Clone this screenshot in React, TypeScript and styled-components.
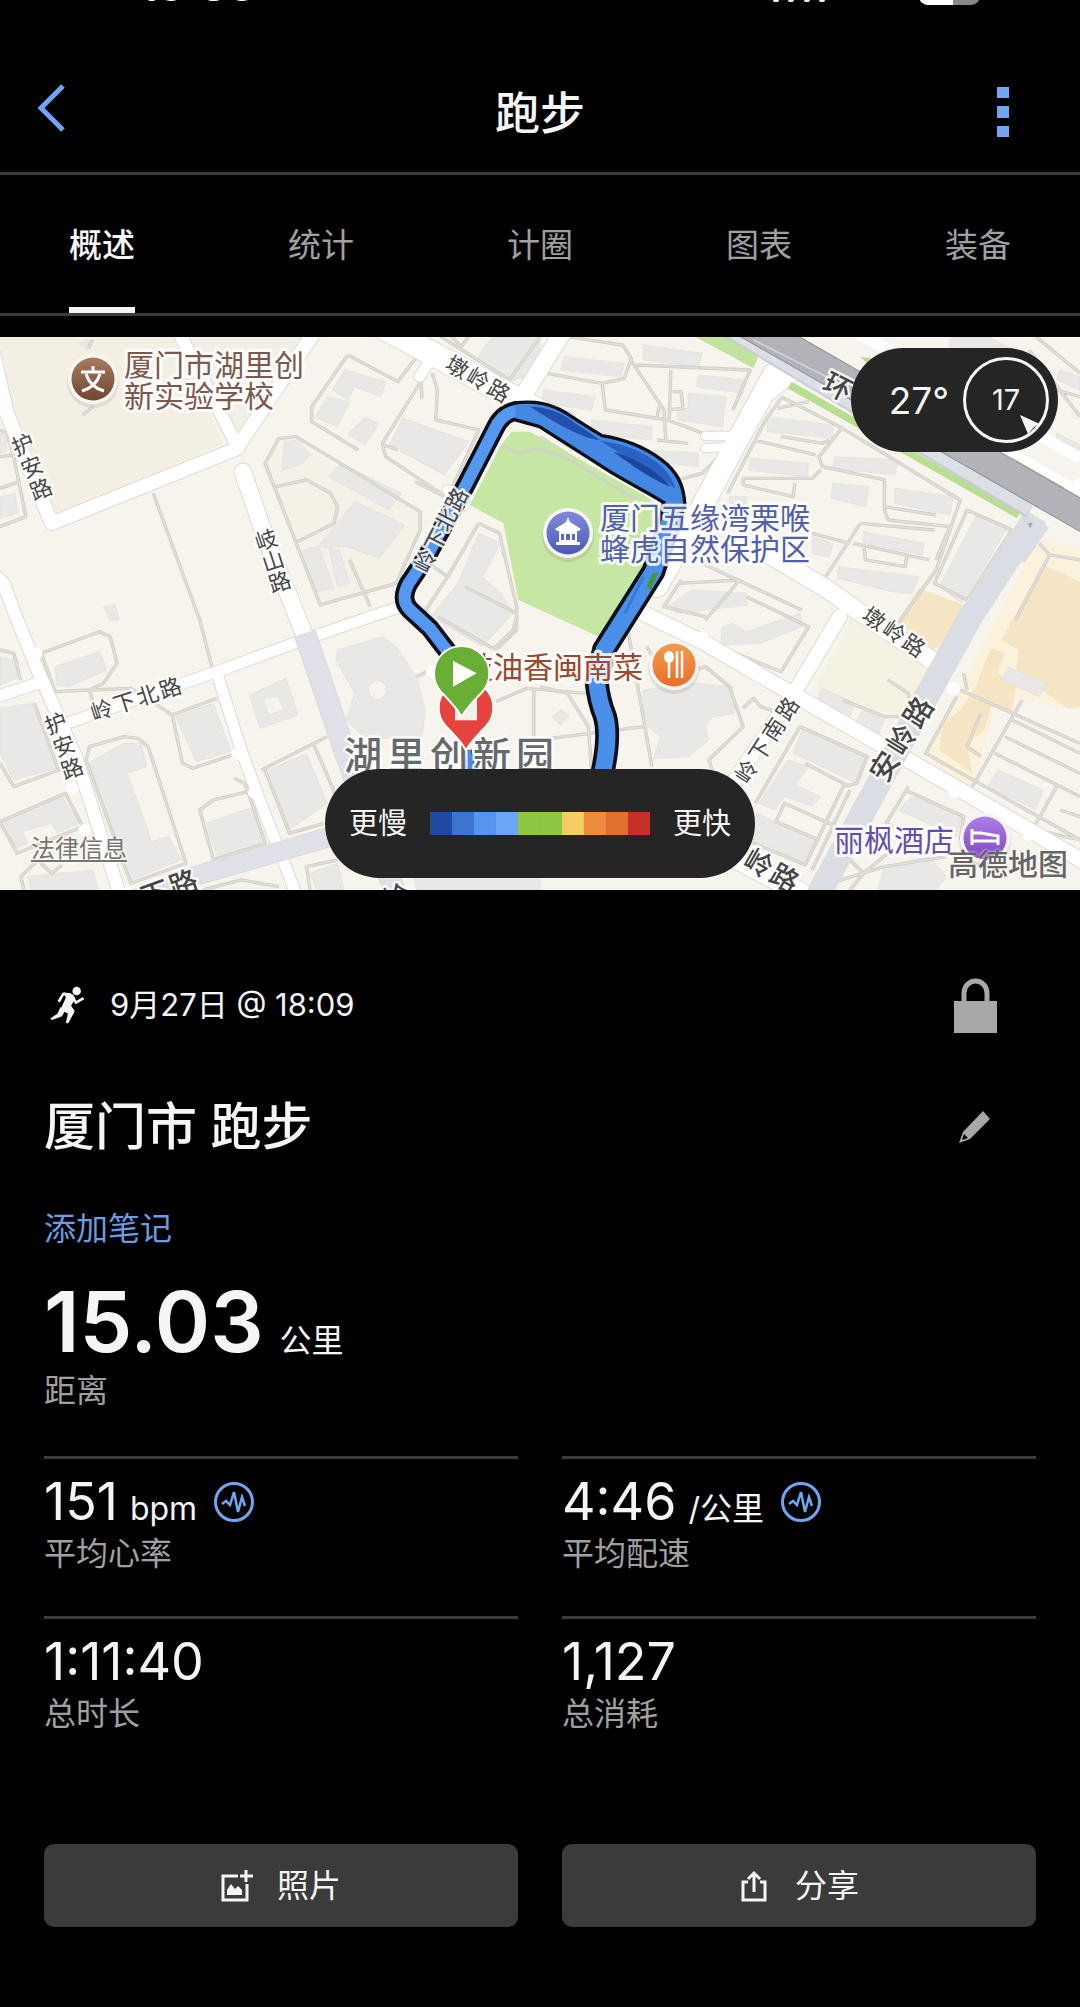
import React, { useState } from "react";
import styled, { createGlobalStyle } from "styled-components";

const fontStack = `Inter, "Noto Sans CJK SC", sans-serif`;

const color = {
  bg: "#000000",
  text: "#f5f5f5",
  muted: "#a0a0a0",
  icon: "#a8a8a8",
  accent: "#6ea6f4",
  line: "#3c3c3c",
  panel: "#252525",
  button: "#3b3b3b",
};

const GlobalStyle = createGlobalStyle`
  *, *::before, *::after { box-sizing: border-box; }
  body { margin: 0; background: ${color.bg}; color: ${color.text}; font-family: ${fontStack}; }
  button { font: inherit; color: inherit; background: none; border: 0; padding: 0; cursor: pointer; }
  h1, h2, p, dl, dd, dt { margin: 0; font-weight: 400; }
`;

const Page = styled.main`
  min-height: 100vh;
  padding-bottom: 80px;
`;

/* ---------- status bar, header, tabs ---------- */

const StatusBar = styled.div`
  display: flex;
  align-items: flex-end;
  justify-content: space-between;
  height: 6px;
  padding: 0 100px 0 139px;
  overflow: hidden;
`;

const Clock = styled.span`
  margin-bottom: 5px;
  font-size: 44px;
  font-weight: 600;
  line-height: 32px;
`;

const StatusIcons = styled.div`
  display: flex;
  align-items: flex-end;
  gap: 92px;
`;

const Header = styled.header`
  display: grid;
  grid-template-columns: 80px 1fr 80px;
  align-items: center;
  height: 169px;
  padding: 46px 38px 0;
  border-bottom: 3px solid ${color.line};
`;

const HeaderButton = styled.button<{ $side: "left" | "right" }>`
  display: flex;
  justify-content: ${(p) => (p.$side === "left" ? "flex-start" : "flex-end")};
  align-items: center;
  height: 64px;
  padding-right: ${(p) => (p.$side === "right" ? "33px" : "0")};
`;

const HeaderTitle = styled.h1`
  padding-top: 3px;
  font-size: 45px;
  font-weight: 500;
  line-height: 52px;
  text-align: center;
`;

const Tabs = styled.nav`
  display: flex;
  justify-content: space-between;
  padding: 0 69px;
  border-bottom: 3px solid ${color.line};
`;

const Tab = styled.button<{ $active: boolean }>`
  height: 138px;
  padding-top: 8px;
  border-bottom: 6px solid ${(p) => (p.$active ? color.text : "transparent")};
  color: ${(p) => (p.$active ? color.text : color.muted)};
  font-size: 33px;
  font-weight: ${(p) => (p.$active ? 500 : 400)};
  line-height: 40px;
`;

/* ---------- map ---------- */

const MapPanel = styled.section`
  position: relative;
  margin-top: 21px;
  overflow: hidden;
`;

const MapCanvas = styled.svg`
  display: block;
  width: 100%;
  height: auto;
  font-family: ${fontStack};
`;

const WeatherPill = styled.div`
  position: absolute;
  top: 11px;
  right: 22px;
  display: flex;
  align-items: center;
  gap: 14px;
  height: 104px;
  padding: 0 9px 0 38px;
  border-radius: 52px;
  background: ${color.panel};
  font-size: 37px;
`;

const PaceLegend = styled.div`
  position: absolute;
  bottom: 12px;
  left: 50%;
  transform: translateX(-50%);
  display: flex;
  align-items: center;
  gap: 23px;
  height: 109px;
  padding: 0 24px;
  border-radius: 55px;
  background: ${color.panel};
  font-size: 29px;
  line-height: 40px;
  white-space: nowrap;
`;

const PaceScale = styled.div`
  display: flex;
  height: 23px;
`;

const PaceStep = styled.span<{ $fill: string }>`
  width: 22px;
  background: ${(p) => p.$fill};
`;

const LegalLink = styled.a`
  position: absolute;
  left: 31px;
  bottom: 26px;
  color: #77756f;
  font-size: 24px;
  line-height: 30px;
  text-underline-offset: 3px;
  text-shadow: 0 0 3px #ffffff, 0 0 3px #ffffff;
`;

const MapCredit = styled.span`
  position: absolute;
  right: 12px;
  bottom: 6px;
  color: #666666;
  font-size: 30px;
  font-weight: 500;
  line-height: 40px;
  text-shadow: 0 0 3px #ffffff;
`;

/* ---------- activity details ---------- */

const Details = styled.section`
  padding: 87px 44px 0;
`;

const SplitRow = styled.div`
  display: flex;
  align-items: center;
  justify-content: space-between;
`;

const When = styled.p`
  display: flex;
  align-items: center;
  gap: 24px;
  padding-left: 5px;
  font-size: 31px;
  line-height: 40px;
`;

const IconButton = styled.button`
  display: flex;
  align-items: center;
  justify-content: center;
  width: 56px;
  height: 56px;
  margin-right: 33px;
  color: ${color.icon};
`;

const TitleRow = styled(SplitRow)`
  height: 60px;
  margin-top: 64px;
`;

const ActivityTitle = styled.h2`
  font-size: 51px;
  font-weight: 500;
  line-height: 60px;
`;

const NoteButton = styled.button`
  display: block;
  margin-top: 52px;
  color: #6c9be2;
  font-size: 32px;
  line-height: 40px;
`;

const Distance = styled.dl`
  display: flex;
  flex-direction: column-reverse;
  gap: 7px;
  margin-top: 31px;
`;

const MetricGrid = styled.dl`
  display: grid;
  grid-template-columns: 1fr 1fr;
  column-gap: 44px;
  margin-top: 45px;
`;

const Metric = styled.div`
  display: flex;
  flex-direction: column-reverse;
  justify-content: flex-end;
  gap: 6px;
  height: 160px;
  padding-top: 17px;
  border-top: 3px solid ${color.line};
`;

const MetricLabel = styled.dt`
  color: ${color.muted};
  font-size: 32px;
  line-height: 40px;
`;

const MetricValue = styled.dd<{ $large?: boolean }>`
  display: flex;
  align-items: baseline;
  gap: ${(p) => (p.$large ? "16px" : "12px")};
  height: ${(p) => (p.$large ? "84px" : "52px")};
  font-size: ${(p) => (p.$large ? "84px" : "52px")};
  font-weight: ${(p) => (p.$large ? 600 : 400)};
  line-height: ${(p) => (p.$large ? "84px" : "52px")};
`;

const Unit = styled.span`
  font-size: 32px;
  font-weight: 400;
  line-height: 40px;
`;

const PulseButton = styled.button`
  align-self: center;
  display: flex;
  margin-left: 5px;
  color: ${color.accent};
`;

const Actions = styled.div`
  display: grid;
  grid-template-columns: 1fr 1fr;
  gap: 44px;
  margin-top: 68px;
`;

const ActionButton = styled.button`
  display: flex;
  align-items: center;
  justify-content: center;
  gap: 24px;
  height: 83px;
  border-radius: 10px;
  background: ${color.button};
  font-size: 32px;
  line-height: 40px;
`;

/* ---------- icons ---------- */

const SignalIcon = () => (
  <svg width="54" height="6" viewBox="0 0 54 6" fill={color.text} aria-hidden="true">
    {[0, 15, 31, 46].map((x) => (
      <rect key={x} x={x} y="-20" width="6" height="22" rx="2" />
    ))}
  </svg>
);

const BatteryIcon = () => (
  <svg width="61" height="6" viewBox="0 0 61 6" aria-hidden="true">
    <clipPath id="battery">
      <rect x="0" y="-24" width="61" height="29" rx="9" />
    </clipPath>
    <g clipPath="url(#battery)">
      <rect width="61" height="6" fill="#888888" />
      <rect width="34" height="6" fill="#ffffff" />
    </g>
  </svg>
);

const BackIcon = () => (
  <svg width="28" height="56" viewBox="0 0 28 56" fill="none" stroke={color.accent} strokeWidth="5" aria-hidden="true">
    <path d="M25 2 3 24 25 46" />
  </svg>
);

const MoreIcon = () => (
  <svg width="12" height="50" viewBox="0 0 12 50" fill={color.accent} aria-hidden="true">
    <rect width="12" height="11" />
    <rect y="19" width="12" height="12" />
    <rect y="39" width="12" height="11" />
  </svg>
);

const RunnerIcon = () => (
  <svg width="37" height="38" viewBox="142 136 106 116" fill="none" stroke={color.text} strokeLinejoin="round" aria-hidden="true">
    <circle cx="223" cy="151" r="13" fill={color.text} stroke="none" />
    <path d="M184 156 212 162 219 174 206 196 216 211 196 216 174 206 190 172Z" fill={color.text} stroke="none" />
    <path d="M206 162 182 160 168 184" strokeWidth="8" />
    <path d="M210 170 221 187 244 173" strokeWidth="8" />
    <path d="M186 202 214 208 215 216 206 232 197 249 191 248 196 226 197 220 180 210Z" fill={color.text} strokeWidth="2" />
    <path d="M174 202 188 210 177 228 147 239 144 235 165 221Z" fill={color.text} strokeWidth="2" />
  </svg>
);

const LockIcon = () => (
  <svg width="43" height="56" viewBox="0 0 43 56" aria-hidden="true">
    <path d="M10 26V16a11.500 12 0 0 1 23 0V26" fill="none" stroke="currentColor" strokeWidth="5" />
    <rect y="24" width="43" height="32" fill="currentColor" />
  </svg>
);

const PencilIcon = () => (
  <svg width="32" height="32" viewBox="0 0 32 32" fill="currentColor" aria-hidden="true">
    <path fillRule="evenodd" d="M24 0 31 8 11 28 0 32 4 21ZM5 23 3 29 9 27Z" />
  </svg>
);

const PulseIcon = () => (
  <svg width="40" height="40" viewBox="0 0 40 40" fill="none" stroke="currentColor" aria-hidden="true">
    <circle cx="20" cy="20" r="18.500" strokeWidth="3" />
    <path d="M8 22 12 19 16 23 20 10 24 30 28 15 31 24" strokeWidth="2.500" />
  </svg>
);

const AddPhotoIcon = () => (
  <svg width="32" height="32" viewBox="0 0 32 32" fill="none" stroke={color.text} strokeWidth="3" aria-hidden="true">
    <path d="M17 6H2V30H26V14M25 0V12M19 6H32" />
    <path d="M6 25V20L10 14 14 19 17 16 21 20V25Z" fill={color.text} stroke="none" />
  </svg>
);

const ShareIcon = () => (
  <svg width="32" height="32" viewBox="-2 0 32 32" fill="none" stroke={color.text} strokeWidth="3" aria-hidden="true">
    <path d="M7 12H2V30H24V12H19M13 22V3M7 9 13 3 19 9" />
  </svg>
);

const WindDial = () => (
  <svg width="86" height="88" viewBox="-43 -44 86 88" role="img" aria-label="风速 17">
    <circle r="41.500" fill="none" stroke={color.text} strokeWidth="3" />
    <path d="M14 15 34 24 28 27 22 34Z" fill={color.text} />
    <text y="10" textAnchor="middle" fill={color.text} fontSize="29" fontFamily={fontStack}>
      17
    </text>
  </svg>
);

/* ---------- map drawing ---------- */

type Road = { d: string; w: number; fill?: string };

const E = 1568; // grid columns per map tile
const S = 840; // grid rows per map tile

const landNW = [
  ["M0 20H500L650 340 160 560 20 250 0 130Z", "#f3f0e3"],
  ["M540 20H900L700 330 650 320Z", "#f2efe8"],
  ["M760 400 820 320 1220 545V600L1150 760 930 825Z", "#f5f1e6"],
];

const buildings = {
  nw: [
    "M1000 120 1120 155 1105 200 1030 170 1010 210 965 180Z",
    "M950 200 1015 215 980 290 915 262Z",
    "M1060 262 1100 280 1060 345 1010 312Z",
    "M1170 265 1362 335 1290 435 1130 345Z",
    "M825 335 865 330 900 375 880 400 820 420Z",
    "M990 400 1165 490 1130 540 955 440Z",
    "M1030 515 1175 585 1100 685 1010 650 925 650Z",
    "M870 665 925 648 970 775 920 785Z",
    "M955 650 985 660 1015 760 980 770Z",
    "M1390 610 1455 640 1400 740 1455 790 1490 850 1400 950 1250 860 1330 760Z",
    "M1430 20H1568V130L1490 150 1380 90Z",
    "M0 310 22 320 18 365 0 370Z",
    "M0 500 45 490 50 550 0 565Z",
    "M230 40 270 30 250 60Z",
    "M300 830 335 825 345 870 320 870Z",
  ],
  ne: [
    "M70 80 245 100 235 140 60 120Z",
    "M300 45 470 70 460 110 300 90Z",
    "M460 135 590 150 590 190 455 170Z",
    "M430 190 540 200 530 290 400 270 400 235 430 235Z",
    "M10 180 160 200 150 240 5 220Z",
    "M150 270 325 290 325 330 150 310Z",
    "M305 360 460 370 460 410 320 395Z",
    "M660 260 850 285 850 325 660 305Z",
    "M610 385 780 400 775 440 605 420Z",
    "M855 380 1040 390 1030 435 850 415Z",
    "M850 460 955 470 945 530 845 505Z",
    "M1030 475 1200 500 1190 555 1030 520Z",
    "M940 605 1115 640 1110 675 940 640Z",
    "M865 710 1100 740 1080 790 1020 785 865 745Z",
    "M1270 550 1360 590 1225 820 1160 770Z",
    "M550 500H600V520H550Z",
    "M790 620 850 640 840 680 790 670Z",
    "M1190 20H1300L1375 60 1190 50Z",
    "M1510 120 1568 140V180L1500 150Z",
    "M1500 310 1568 345V385L1500 350Z",
    "M440 780 600 790 600 825 400 850 370 830Z",
  ],
  sw: [
    "M160 170 290 125 310 180 200 230 165 225Z",
    "M0 295 95 280 165 475 40 510 0 430Z",
    "M0 140 45 150 50 205 0 225Z",
    "M510 320 620 280 670 425 570 455Z",
    "M725 255 830 205 865 315 755 355ZM765 265 780 315 825 300 808 258Z",
    "M980 120 1110 80 1150 110 1210 200 1235 300 1225 385H1060L1005 330 1030 250 975 150ZM1070 240A26 28 0 1 0 1122 240 26 28 0 1 0 1070 240Z",
    "M255 460 360 400 410 400 425 470 370 490 440 695 490 680 525 750 380 810Z",
    "M10 630 180 560 230 640 165 670 150 640 65 665 80 700 45 715Z",
    "M600 640 740 590 760 700 630 740Z",
    "M780 480 890 430 950 580 840 660Z",
    "M80 800 270 780 285 840H90Z",
    "M900 790 980 760 1000 840H920Z",
    "M1200 800H1568V840H1210Z",
  ],
  se: [
    "M530 50 560 40 600 65 755 10 760 50 640 100 525 105Z",
    "M300 240 450 220 560 230 565 310 500 320 480 350 490 390 430 440 330 445 350 380 300 340Z",
    "M60 300 85 315 60 345 35 320Z",
    "M820 235 915 280 895 330 800 275Z",
    "M935 300 1000 330 975 390 915 345Z",
    "M765 350 940 440 920 520 735 430Z",
    "M720 450 780 470 740 525 815 560 790 590 710 560 680 600 635 580Z",
    "M630 610 800 690 770 760 600 680Z",
    "M1080 560 1225 620 1210 680 1040 600Z",
    "M1330 480 1460 540 1440 600 1300 530Z",
    "M1360 170 1470 220 1450 260 1340 210Z",
    "M1000 770 1130 740 1180 800 1150 840H980Z",
  ],
};

const farmland = [
  "M1100 775 1245 830 1190 940 1130 960 1040 870Z",
  "M1460 705 1568 755V1130L1530 1135 1470 1090 1380 1040 1390 960 1340 930Z",
  "M1310 955 1350 970 1330 1030 1385 1060 1370 1140 1310 1130 1290 1200 1240 1240 1255 1330 1160 1260 1170 1180 1220 1140 1260 1080Z",
];

const lanes = {
  nw: "M1010 75 905 230V275L1040 360M1010 75 1155 155 1210 80M1225 150 1110 340 1120 380 1280 490M1255 130 1270 180 1265 270 1390 300 1310 480M860 320 1220 545V600L1150 760 930 825 770 400 810 325ZM800 470 890 450 960 490 980 530 970 580 865 635M1015 690 1075 830M1115 345 1155 360M1205 455 1290 500M1222 150 1225 205M445 490 580 870 615 1010M0 300 20 310 40 380 75 560 0 590M0 380 38 375M0 475 58 455M1390 580 1300 740 1230 850M1390 580 1450 610 1500 830 1500 900 1440 960M1350 770 1500 850M1245 700 1300 740M1460 350 1510 375 1568 355M1280 20 1480 150 1568 20M1310 20 1340 50 1360 20M240 255 270 230M255 55 270 30",
  ne: "M260 85 360 240 365 330M280 105 610 120 560 240M180 160 190 240 370 270 500 320M20 130 180 160 245 145 265 85 240 45 80 20M380 120 375 270M385 185H410L415 235 370 240M345 230 340 265M0 90 20 130M700 200 870 290 1220 510 1150 720 1040 880M700 205 655 270 545 490M690 235 780 215M880 290 810 380 820 410 1000 450 1000 540 1010 570M1000 530 1150 555M620 330 800 375M590 445H790L815 420M590 440V465L735 500 740 460M700 320 820 340 840 330M930 580 830 740M930 580 1145 600M910 640 1130 690M940 640 945 690 1060 710 1065 680M1240 540 1145 760 1240 810 1370 600ZM1450 640 1480 675 1568 690M1480 675 1380 870M790 610 900 640M1010 570 1190 590 1150 690M400 760 580 750 480 870M470 700 760 840M410 750 360 830 480 860M340 330 430 340M560 340 470 430 400 450M1420 60 1568 260M1440 20 1568 130M1500 180 1568 200M0 320 60 360 280 500",
  sw: "M120 130 290 65 320 80 340 160 300 220 260 240 160 245ZM260 240 270 280M260 240 380 235 500 315 630 265M500 315 530 460 560 475 690 430M250 450 260 410 360 380 400 385 430 410 540 760 380 820ZM100 280 170 480 40 530 0 460M0 120 40 130 60 210M0 635 190 550 240 650 50 730ZM580 600 620 570 720 545 770 700 620 750ZM680 505 710 520 720 545M760 480 950 380M910 400 985 580M770 480 840 670 940 640M60 800 110 750 150 790 180 765M60 800 70 840M900 840 890 770 980 750M590 840 700 810 810 830M1210 200 1250 180M1440 275 1530 235 1700 250M1550 240V380M1270 20 1440 120M1500 20 1490 60 1430 120",
  se: "M520 110 700 185 780 50 600 -40M0 230 80 250 140 350 150 480M30 385 300 350M255 60 325 470M310 110 370 210 480 170 550 230 590 350 490 450 500 480M590 295 620 265 640 290 700 310M755 350 625 580M755 350 950 440 920 520 880 530 770 765 600 690M770 460 890 525M900 540 790 780M860 650 710 580 685 635 810 690M1010 210 1070 250 1080 320M880 270 1000 320 1060 320M1210 260 1120 430 1568 690M1400 270 1250 540M1220 240 1568 400M1370 330 1568 430M1350 380 1568 490M1320 430 1568 560M1280 310 1240 410 1280 440M1500 530 1430 660M1070 530 1005 640 1060 670M1060 540 1230 620 1220 690M1440 660 1568 690M1510 600 1568 620M780 840 1000 770 1180 740M880 730 940 790 900 840M940 790 1010 730M1230 190 1240 240",
};

const roads: Road[] = [
  { d: "M-20 70 20 250 150 580 690 355", w: 40 },
  { d: "M505 -20 690 350", w: 36 },
  { d: "M930 -20 690 350", w: 40 },
  { d: "M705 425 770 620 890 930", w: 48 },
  { d: "M-30 720 10 760 50 870 105 1010 220 1280 350 1700", w: 36 },
  { d: "M-10 1100 110 1060", w: 34 },
  { d: "M180 1185 630 1025 880 930 1190 820", w: 32 },
  { d: "M630 1030 700 1260 750 1400 870 1720", w: 32 },
  { d: "M1090 -20 1560 240 1640 280", w: 70 },
  { d: "M1250 90 1218 140", w: 30 },
  { d: "M1650 -20 1500 230", w: 50 },
  { d: "M1360 500 1300 480", w: 30 },
  { d: `M${E + 680} 130 ${E + 590} 300 ${E + 480} 510 ${E + 340} 770`, w: 62 },
  { d: `M${E + 740} 130 ${E + 640} 210`, w: 40 },
  { d: `M${E + 480} 318H${E + 560}`, w: 26 },
  { d: `M${E + 480} 355 ${E + 540} 350`, w: 24 },
  { d: `M${E + 610} 640 ${E + 830} 775 ${E + 960} 870 ${E + 1160} 1005`, w: 52 },
  { d: `M${E + 200} 800 ${E + 480} 940 ${E + 730} 1090 ${E + 1000} 1250 ${E + 1220} 1380 ${E + 1620} 1620`, w: 44 },
  { d: `M${E + 870} 860 ${E + 740} 1085 ${E + 560} 1360`, w: 42 },
  { d: `M${E + 560} 1580 ${E + 760} 1690`, w: 60 },
];

const arterials: Road[] = [
  { d: `M885 ${S + 70} 1000 ${S + 420} 1100 ${S + 700} 1150 ${S + 860}`, w: 60, fill: "#dfe0e8" },
  { d: `M340 ${S + 890} 560 ${S + 800} 960 ${S + 680}`, w: 54, fill: "#dfe0e8" },
  { d: `M${E + 1440} 560 ${E + 1250} 860 ${E + 1010} ${S + 470} ${E + 800} ${S + 870}`, w: 66, fill: "#dadde4" },
];

const RoadSet = ({ items, cap = "round" }: { items: Road[]; cap?: "round" | "butt" }) => (
  <g fill="none" strokeLinejoin="round" strokeLinecap={cap}>
    {items.map((r) => (
      <path key={`c${r.d}`} d={r.d} stroke="#dedbd5" strokeWidth={r.w + 6} />
    ))}
    {items.map((r) => (
      <path key={r.d} d={r.d} stroke={r.fill ?? "#ffffff"} strokeWidth={r.w} />
    ))}
  </g>
);

const LaneSet = ({ d }: { d: string }) => (
  <g fill="none" strokeLinejoin="round">
    <path d={d} stroke="#d0cec7" strokeWidth="10" />
    <path d={d} stroke="#e0ded7" strokeWidth="5" />
  </g>
);

type RoadLabelProps = {
  name: string;
  x: number;
  y: number;
  angle: number;
  pitch: number;
  stacked?: boolean;
  size?: number;
  weight?: number;
  fill?: string;
};

/* A street name set along its road; stacked names run down steep roads. */
const RoadLabel = ({ name, x, y, angle, pitch, stacked, size = 22, weight = 400, fill = "#454545" }: RoadLabelProps) => {
  const steps = Array.from(name).map((_, i) => (i - (name.length - 1) / 2) * pitch);
  const base = Math.round(size * 0.38);
  return (
    <text
      transform={`translate(${x} ${y}) rotate(${angle})`}
      x={stacked ? steps.map(() => 0).join(" ") : steps.join(" ")}
      y={stacked ? steps.map((s) => s + base).join(" ") : base}
      fontSize={size}
      fontWeight={weight}
      fill={fill}
      stroke="#ffffff"
      strokeWidth="5"
      strokeOpacity="0.85"
      strokeLinejoin="round"
      paintOrder="stroke"
      textAnchor="middle"
    >
      {name}
    </text>
  );
};

type PlaceProps = { x: number; y: number; fill: string; lines: string[]; anchor?: "start" | "end" };

const PlaceLabel = ({ x, y, fill, lines, anchor = "start" }: PlaceProps) => (
  <g fontSize="30" fontWeight="400" fill={fill} stroke="#ffffff" strokeOpacity="0.85" strokeWidth="6" strokeLinejoin="round" textAnchor={anchor}>
    {lines.map((line, i) => (
      <text key={line} x={x} y={y + i * 31} paintOrder="stroke">
        {line}
      </text>
    ))}
  </g>
);

const PlaceBadge = ({ x, y, paint, children }: { x: number; y: number; paint: string; children: React.ReactNode }) => (
  <g transform={`translate(${x} ${y})`}>
    <circle cy="3" r="26" fill="#000000" opacity="0.08" />
    <circle r="25" fill="#f7f5f3" />
    <circle r="21.500" fill={paint} />
    {children}
  </g>
);

const Gradient = ({ id, from, to }: { id: string; from: string; to: string }) => (
  <linearGradient id={id} x1="0" y1="0" x2="0" y2="1">
    <stop offset="0" stopColor={from} />
    <stop offset="1" stopColor={to} />
  </linearGradient>
);

const westLeg = "M215 830 150 745 90 690Q60 660 85 612L140 530 255 320 345 145Q368 96 415 92L450 98";
const eastLeg = "M884 360 868 430 820 575 672 810 650 905Q655 960 675 1010 692 1070 665 1190";
const northBand =
  "M405 74C470 66 510 78 550 100C590 125 625 150 665 172C730 182 790 205 840 242C885 275 908 315 910 380L852 362C800 330 750 305 700 275L480 135 405 114Z";

const RouteMap = () => (
  <MapCanvas viewBox="0 0 1080 553" role="img" aria-label="跑步路线地图">
    <defs>
      <Gradient id="school" from="#a97c60" to="#6f4531" />
      <Gradient id="park" from="#7f8ade" to="#4d5ab8" />
      <Gradient id="food" from="#f59b4b" to="#ea6d2b" />
      <Gradient id="hotel" from="#b07fe6" to="#7d46c4" />
    </defs>
    <rect width="1080" height="553" fill="#f7f4ed" />

    <g transform="translate(0 -7) scale(0.3444 0.3333)">
      {landNW.map(([d, fill]) => (
        <path key={d} d={d} fill={fill} />
      ))}
      <g transform={`translate(${E} 0)`}>
        <path d="M1450 620 1568 660V1140L1330 1100 1250 1400 1120 1270Z" fill="#fbf2dc" />
        <path d="M900 870 1130 1000 1060 1160 780 1110Z" fill="#f5f2e4" />
        {farmland.map((d) => (
          <path key={d} d={d} fill="#f6e5c5" />
        ))}
      </g>
      <g fill="#eae8e6" fillRule="evenodd" stroke="#e0dedb" strokeWidth="2">
        {buildings.nw.map((d) => (
          <path key={d} d={d} />
        ))}
        <g transform={`translate(${E} 0)`}>
          {buildings.ne.map((d) => (
            <path key={d} d={d} />
          ))}
        </g>
        <g transform={`translate(0 ${S})`}>
          {buildings.sw.map((d) => (
            <path key={d} d={d} />
          ))}
        </g>
        <g transform={`translate(${E} ${S})`}>
          {buildings.se.map((d) => (
            <path key={d} d={d} />
          ))}
        </g>
      </g>
      <LaneSet d={lanes.nw} />
      <g transform={`translate(${E} 0)`}>
        <LaneSet d={lanes.ne} />
      </g>
      <g transform={`translate(0 ${S})`}>
        <LaneSet d={lanes.sw} />
      </g>
      <g transform={`translate(${E} ${S})`}>
        <LaneSet d={lanes.se} />
      </g>
      <RoadSet items={roads} />
      <RoadSet items={arterials} cap="butt" />

      <g transform={`translate(${E} 0)`}>
        <path d="M450 20H580L635 75 620 115Z" fill="#c2e39d" />
        <path d="M930 80 990 90 960 110Z" fill="#b5dd8c" />
        <path d="M1385 365 1545 460 1520 475 1370 385Z" fill="#b5dd8c" />
        <path d="M725 165 1390 555" stroke="#b8de92" strokeWidth="22" />
        <path d="M540 0 1420 545" stroke="#c9ccd3" strokeWidth="40" />
        <path d="M545 0 1420 540" stroke="#dcdfe6" strokeWidth="34" />
        <path d="M890 -10 1568 385" stroke="#ffffff" strokeWidth="34" />
        <path d="M1340 350 1620 515" stroke="#ffffff" strokeWidth="26" />
        <path d="M1568 450 1520 505" stroke="#ffffff" strokeWidth="24" />
        <path d="M600 -20 1620 585" stroke="#8f9196" strokeWidth="90" />
        <path d="M600 -20 1620 585" stroke="#b1b3b8" strokeWidth="84" />
        <path d="M620 30 840 145" stroke="#cfd1d5" strokeWidth="5" />
        <path d="M1450 574 1380 680" stroke="#dadde4" strokeWidth="66" />
        <path d="M1430 578 1424 595 1416 580Z" fill="#a4a6ab" />
      </g>
      <g fill="#ffffff">
        <circle cx="105" cy="970" r="18" />
        <circle cx="210" cy="1375" r="18" />
        <circle cx="245" cy="1500" r="18" />
        <circle cx="690" cy="1272" r="18" />
        <circle cx="738" cy="1388" r="18" />
        <circle cx="1255" cy="1025" r="18" />
        <circle cx={E + 470} cy="925" r="20" />
        <circle cx={E + 1200} cy="1075" r="20" />
        <circle cx={E + 1205} cy="1385" r="20" />
        <circle cx={E + 1420} cy="1515" r="18" />
      </g>
    </g>

    <g transform="translate(380 43) scale(0.3333)">
      <path d="M395 155H450L800 350 880 420 660 772 415 660 370 430 270 375 360 200Z" fill="#c6e6a3" />
      <path d="M365 198 425 222 475 205 560 235 770 360" fill="none" stroke="#cfd3c4" strokeWidth="9" />

      <path d="M258 1112 276 1200" stroke="#0b0f18" strokeWidth="34" />
      <path d="M262 1112 280 1200" stroke="#4a8be8" strokeWidth="22" />

      <g fill="none" strokeLinejoin="round">
        <path d={westLeg} stroke="#0c0f16" strokeWidth="58" />
        <path d={eastLeg} stroke="#0c0f16" strokeWidth="72" />
        <path d={northBand} stroke="#0c0f16" strokeWidth="20" />
        <path d={westLeg} stroke="#5598f0" strokeWidth="36" />
        <path d={eastLeg} stroke="#4a8fe9" strokeWidth="50" />
        <path d={northBand} fill="#4588e4" />
      </g>
      <path d="M450 80C500 80 540 98 560 112L660 180C610 178 520 125 450 80Z" fill="#1f50ac" />
      <path d="M660 182C730 190 790 215 835 250 870 282 885 310 885 325 830 285 750 240 660 182Z" fill="#2a62c4" />
      <path d="M700 215C780 240 840 280 870 320 820 300 760 260 700 215Z" fill="#1c4796" />
      <path d="M835 575 812 630 800 620 818 580Z" fill="#3f9a2f" />
      <path d="M790 590 735 700" stroke="#3a78d6" strokeWidth="8" />
    </g>

    <RoadLabel name="护安路" x={32} y={130} angle={-22} pitch={24} stacked />
    <RoadLabel name="岐山路" x={273} y={224} angle={-18} pitch={22} stacked />
    <RoadLabel name="墩岭路" x={478} y={42} angle={30} pitch={24} />
    <RoadLabel name="岭下北路" x={441} y={193} angle={-63} pitch={23} />
    <RoadLabel name="岭下北路" x={136} y={362} angle={-18} pitch={24} />
    <RoadLabel name="护安路" x={64} y={409} angle={-20} pitch={24} stacked />
    <RoadLabel name="墩岭路" x={894} y={295} angle={34} pitch={24} />
    <RoadLabel name="岭下南路" x={767} y={403} angle={-57} pitch={25} />
    <RoadLabel name="安岭路" x={901} y={402} angle={-58} pitch={32} size={29} weight={500} />
    <RoadLabel name="环" x={838} y={49} angle={27} pitch={29} size={28} weight={500} />
    <RoadLabel name="岭下路" x={155} y={556} angle={-20} pitch={30} size={28} weight={500} />
    <RoadLabel name="岭路" x={772} y={533} angle={30} pitch={30} size={28} weight={500} />
    <RoadLabel name="岭" x={396} y={560} angle={-20} pitch={29} size={28} weight={500} />
    <RoadLabel name="湖里创新园" x={449} y={418} angle={0} pitch={43} size={38} weight={500} fill="#66696c" />

    <PlaceLabel x={124} y={39} fill="#7b594d" lines={["厦门市湖里创", "新实验学校"]} />
    <PlaceLabel x={600} y={192} fill="#5160ad" lines={["厦门五缘湾栗喉", "蜂虎自然保护区"]} />
    <PlaceLabel x={643} y={341} fill="#99492d" lines={["豉油香闽南菜"]} anchor="end" />
    <PlaceLabel x={954} y={514} fill="#6250ae" lines={["丽枫酒店"]} anchor="end" />

    <PlaceBadge x={93} y={42} paint="url(#school)">
      <path d="M-12-7H12M0-13V-7M-7-5Q-3 8 11 12M7-5Q3 8-11 12" fill="none" stroke="#ffffff" strokeWidth="3" />
    </PlaceBadge>
    <PlaceBadge x={568} y={196} paint="url(#park)">
      <path d="M0-16 2-11 13-4 11-2H-11L-13-4-2-11ZM-9-2H9V9H-9ZM-12 9H12V12H-12Z" fill="#ffffff" />
      <path d="M-7 1H-4V7H-7ZM-2 1H2V7H-2ZM4 1H7V7H4Z" fill="#5d69c4" />
    </PlaceBadge>
    <PlaceBadge x={674} y={328} paint="url(#food)">
      <ellipse cx="-5" cy="-8" rx="5" ry="6" fill="#ffffff" />
      <path d="M-5-4V13M3-14V13M8-14V13" stroke="#ffffff" strokeWidth="2.500" />
    </PlaceBadge>
    <PlaceBadge x={985} y={501} paint="url(#hotel)">
      <path d="M-13-9V7M-13 3H13M13 7V-2L-4-5H-13" fill="none" stroke="#ffffff" strokeWidth="3" />
    </PlaceBadge>

    <g transform="translate(380 43) scale(0.3333)" stroke="#ffffff" strokeWidth="6" strokeLinejoin="round">
      <path d="M258 1112Q250 1092 197 1038A82 82 0 1 1 319 1038Q266 1092 258 1112Z" fill="#e7423c" />
      <path d="M225 955H291V1021H225Z" fill="#f3f1f0" stroke="none" />
      <path d="M245 1012Q236 990 183 936A83 83 0 1 1 307 936Q254 990 245 1012Z" fill="#69ae35" />
      <path d="M219 842 290 880 219 920Z" fill="#ffffff" stroke="none" />
    </g>
  </MapCanvas>
);

/* ---------- screen ---------- */

const tabNames = ["概述", "统计", "计圈", "图表", "装备"];

const paceColors = ["#1f4a9f", "#3b75cf", "#5794ee", "#6ba6f7", "#8fc742", "#8fc742", "#f3cf63", "#ee8c3e", "#e0702f", "#c6302b"];

const metrics = [
  { label: "平均心率", value: "151", unit: "bpm", chart: true },
  { label: "平均配速", value: "4:46", unit: "/公里", chart: true },
  { label: "总时长", value: "1:11:40" },
  { label: "总消耗", value: "1,127" },
];

export default function App() {
  const [tab, setTab] = useState(tabNames[0]);
  return (
    <Page lang="zh-CN">
      <GlobalStyle />
      <StatusBar aria-hidden="true">
        <Clock>19:38</Clock>
        <StatusIcons>
          <SignalIcon />
          <BatteryIcon />
        </StatusIcons>
      </StatusBar>

      <Header>
        <HeaderButton $side="left" aria-label="返回">
          <BackIcon />
        </HeaderButton>
        <HeaderTitle>跑步</HeaderTitle>
        <HeaderButton $side="right" aria-label="更多">
          <MoreIcon />
        </HeaderButton>
      </Header>

      <Tabs>
        {tabNames.map((name) => (
          <Tab key={name} $active={name === tab} onClick={() => setTab(name)}>
            {name}
          </Tab>
        ))}
      </Tabs>

      <MapPanel>
        <RouteMap />
        <LegalLink href="#legal">法律信息</LegalLink>
        <MapCredit>高德地图</MapCredit>
        <WeatherPill>
          <span>27°</span>
          <WindDial />
        </WeatherPill>
        <PaceLegend>
          <span>更慢</span>
          <PaceScale>
            {paceColors.map((fill, i) => (
              <PaceStep key={i} $fill={fill} />
            ))}
          </PaceScale>
          <span>更快</span>
        </PaceLegend>
      </MapPanel>

      <Details>
        <SplitRow>
          <When>
            <RunnerIcon />
            <span>9月27日 @ 18:09</span>
          </When>
          <IconButton aria-label="隐私设置">
            <LockIcon />
          </IconButton>
        </SplitRow>
        <TitleRow>
          <ActivityTitle>厦门市 跑步</ActivityTitle>
          <IconButton aria-label="编辑名称">
            <PencilIcon />
          </IconButton>
        </TitleRow>
        <NoteButton>添加笔记</NoteButton>

        <Distance>
          <MetricLabel>距离</MetricLabel>
          <MetricValue $large>
            15.03 <Unit>公里</Unit>
          </MetricValue>
        </Distance>

        <MetricGrid>
          {metrics.map((m) => (
            <Metric key={m.label}>
              <MetricLabel>{m.label}</MetricLabel>
              <MetricValue>
                {m.value}
                {m.unit && <Unit>{m.unit}</Unit>}
                {m.chart && (
                  <PulseButton aria-label={`${m.label}图表`}>
                    <PulseIcon />
                  </PulseButton>
                )}
              </MetricValue>
            </Metric>
          ))}
        </MetricGrid>

        <Actions>
          <ActionButton>
            <AddPhotoIcon />
            照片
          </ActionButton>
          <ActionButton>
            <ShareIcon />
            分享
          </ActionButton>
        </Actions>
      </Details>
    </Page>
  );
}
